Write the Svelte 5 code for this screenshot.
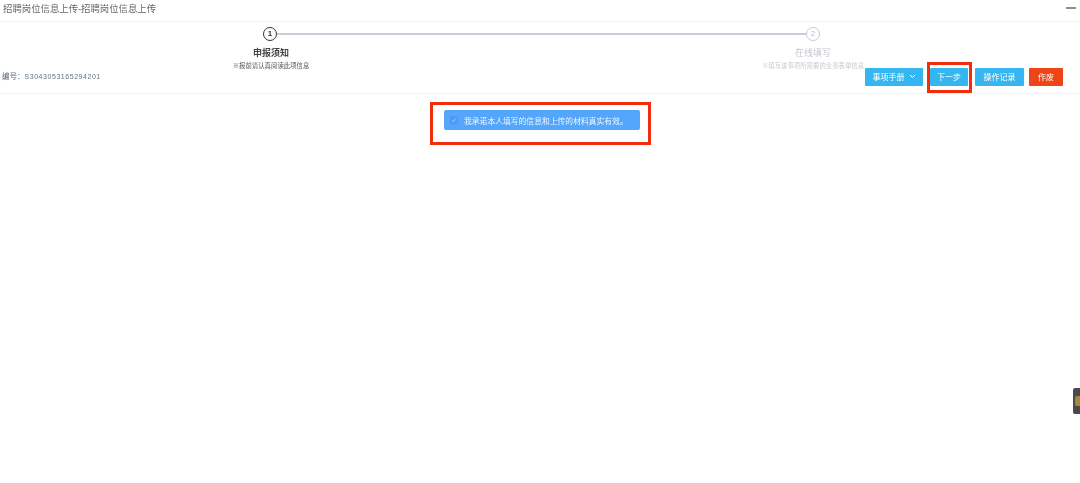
<script>
  const buttons = [
    { label: '下一步', cls: 'next' },
    { label: '操作记录', cls: 'log' },
    { label: '作废', cls: 'void' }
  ];
</script>

<div class="page">
  <header class="head">
    <h1>招聘岗位信息上传-招聘岗位信息上传</h1>
    <span class="minimize"></span>
  </header>

  <section class="bar">
    <div class="steps">
      <div class="track">
        <span class="dot active">1</span>
        <span class="line"></span>
        <span class="dot">2</span>
      </div>
      <div class="labels">
        <div class="label active">
          <strong>申报须知</strong>
          <small>※报前请认真阅读此项信息</small>
        </div>
        <div class="label">
          <strong>在线填写</strong>
          <small>※填写该事项所需要的业务表单信息</small>
        </div>
      </div>
    </div>

    <div class="tools">
      <span class="code">编号：<span class="num">S3043053165294201</span></span>
      <div class="actions">
        <button class="btn manual">
          事项手册
          <svg width="7" height="5" viewBox="0 0 7 5"><path d="M1 1l2.5 2.5L6 1" fill="none" stroke="#fff" stroke-width="1"/></svg>
        </button>
        {#each buttons as b}
          <button class="btn {b.cls}">{b.label}</button>
        {/each}
      </div>
    </div>
  </section>

  <main class="body">
    <div class="notice">
      <span class="check">
        <svg width="6" height="6" viewBox="0 0 6 6"><path d="M1 3.2l1.4 1.4L5 1.6" fill="none" stroke="#a9d2fd" stroke-width="0.9"/></svg>
      </span>
      <span>我承诺本人填写的信息和上传的材料真实有效。</span>
    </div>
  </main>

  <span class="mark mark-next"></span>
  <span class="mark mark-notice"></span>
  <aside class="float"><span></span></aside>
</div>

<style>
  :global(body) {
    margin: 0;
    background: #fff;
  }
  .page {
    position: relative;
    width: 1080px;
    height: 483px;
    overflow: hidden;
    font-family: "Liberation Sans", "Noto Sans CJK SC", sans-serif;
    color: #555;
    filter: blur(0.3px);
  }
  .head {
    height: 22px;
    box-sizing: border-box;
    padding: 0 4px 0 3px;
    display: flex;
    align-items: flex-start;
    justify-content: space-between;
    border-bottom: 1px solid #f3f3f3;
  }
  h1 {
    margin: 2px 0 0;
    font-size: 9.4px;
    line-height: 13px;
    font-weight: 400;
    color: #666;
  }
  .minimize {
    width: 10px;
    height: 2px;
    margin-top: 7px;
    background: #8a8f96;
  }
  .bar {
    height: 72px;
    box-sizing: border-box;
    display: grid;
    border-bottom: 1px solid #f3f3f3;
  }
  .steps, .tools {
    grid-area: 1 / 1;
  }
  .track {
    display: flex;
    align-items: center;
    margin: 5px 260px 0 263px;
  }
  .dot {
    width: 14px;
    height: 14px;
    box-sizing: border-box;
    border: 1px solid #c6c9d6;
    border-radius: 50%;
    font-size: 8px;
    line-height: 12px;
    text-align: center;
    color: #b8bcc8;
  }
  .dot.active {
    border: 1.5px solid #333;
    line-height: 11px;
    color: #333;
    font-weight: 700;
  }
  .line {
    flex: 1;
    height: 1.5px;
    background: #c9ccdb;
  }
  .labels {
    display: flex;
    justify-content: space-between;
    padding: 5px 187px 0 191px;
  }
  .label {
    width: 160px;
    text-align: center;
    display: flex;
    flex-direction: column;
    align-items: center;
  }
  .label strong {
    font-size: 9px;
    line-height: 14px;
    font-weight: 400;
    color: #c4c6cc;
  }
  .label small {
    margin-top: 1px;
    font-size: 6.4px;
    line-height: 9px;
    color: #c8cad0;
    white-space: nowrap;
  }
  .label.active strong {
    font-weight: 700;
    color: #444;
  }
  .label.active small {
    color: #555;
  }
  .tools {
    display: flex;
    justify-content: space-between;
    align-items: flex-end;
    padding: 0 17px 7px 2px;
  }
  .code {
    font-size: 7.5px;
    line-height: 10px;
    margin-bottom: 4px;
    color: #5d6875;
  }
  .num {
    font-size: 7px;
    letter-spacing: 0.55px;
    color: #5f7288;
  }
  .actions {
    display: flex;
  }
  .btn {
    height: 18px;
    padding: 0 0 1px;
    box-sizing: border-box;
    border: 0;
    border-radius: 1px;
    background: #35b6f1;
    color: #fff;
    font: inherit;
    font-size: 8px;
    display: flex;
    align-items: center;
    justify-content: center;
    gap: 4px;
  }
  .manual { width: 58px; margin-right: 7px; }
  .next { width: 38px; margin-right: 7px; }
  .log { width: 49px; margin-right: 5px; }
  .void { width: 34px; background: #ef4418; }
  .body {
    display: flex;
    justify-content: center;
    padding: 16px 0 0 4px;
  }
  .notice {
    width: 196px;
    height: 20px;
    box-sizing: border-box;
    padding-left: 6px;
    display: flex;
    align-items: center;
    gap: 6px;
    border-radius: 2px;
    background: #54a5fc;
    color: #eef6ff;
    font-size: 7.8px;
    white-space: nowrap;
  }
  .check {
    width: 8px;
    height: 8px;
    border-radius: 1px;
    background: #4b9af5;
    display: flex;
    align-items: center;
    justify-content: center;
  }
  .mark {
    position: absolute;
    box-sizing: border-box;
    border: 3px solid #f12d0e;
  }
  .mark-next {
    left: 927px;
    top: 62px;
    width: 45px;
    height: 31px;
  }
  .mark-notice {
    left: 430px;
    top: 102px;
    width: 221px;
    height: 43px;
  }
  .float {
    position: absolute;
    left: 1073px;
    top: 388px;
    width: 7px;
    height: 26px;
    background: #4a4a4a;
    border-radius: 2px 0 0 2px;
  }
  .float span {
    position: absolute;
    left: 2px;
    top: 8px;
    width: 5px;
    height: 10px;
    background: #a8863f;
    border-radius: 2px 0 0 2px;
  }
</style>
